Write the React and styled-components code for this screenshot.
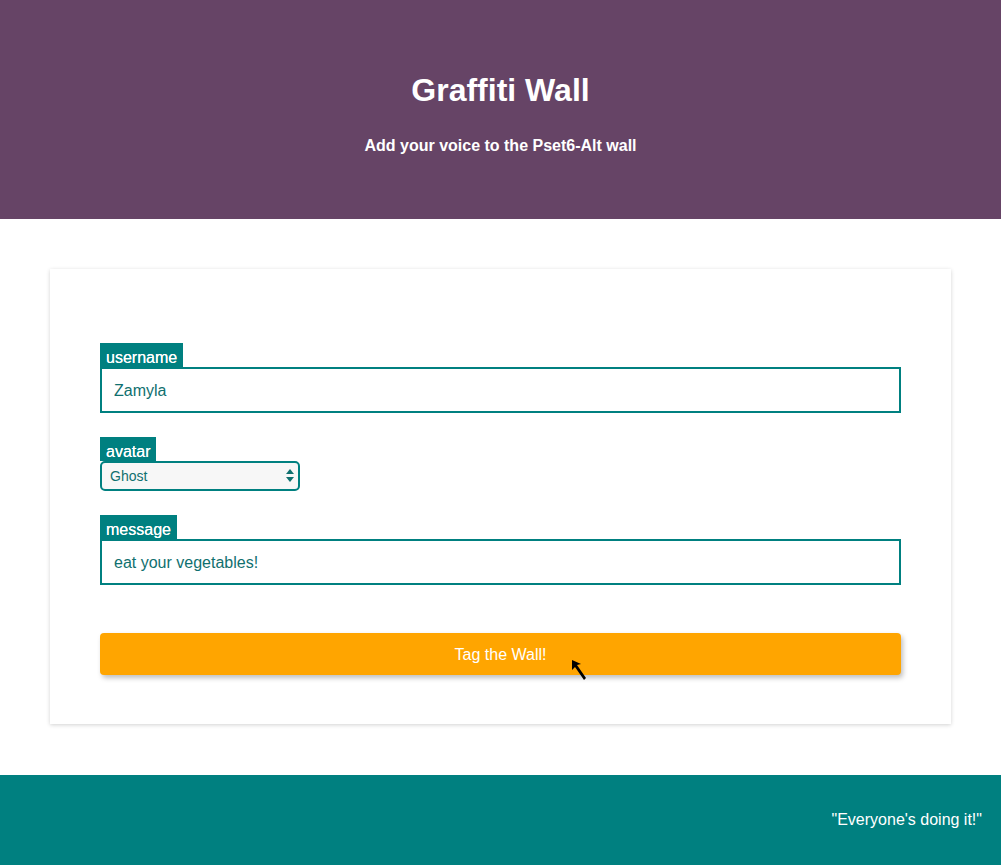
import React from "react";
import styled, { createGlobalStyle } from "styled-components";

const GlobalStyle = createGlobalStyle`
  body {
    margin: 0;
    font-family: "Liberation Sans", Arial, sans-serif;
    background: #ffffff;
  }
`;

const Header = styled.header`
  height: 219px;
  background: #664466;
  color: #ffffff;
  display: flex;
  flex-direction: column;
  align-items: center;
  box-sizing: border-box;
  padding-top: 70px;
`;

const Title = styled.h1`
  margin: 0;
  font-size: 32px;
  font-weight: bold;
  line-height: 40px;
`;

const Subtitle = styled.h2`
  margin: 26px 0 0;
  font-size: 16px;
  font-weight: bold;
  line-height: 20px;
`;

const Main = styled.main`
  padding: 50px 50px 51px;
`;

const Card = styled.form`
  background: #ffffff;
  box-shadow: 0 1px 4px rgba(0, 0, 0, 0.18);
  padding: 74px 50px 49px;
  display: flex;
  flex-direction: column;
`;

const Field = styled.div`
  display: flex;
  flex-direction: column;
  align-items: flex-start;
  margin-bottom: 24px;
`;

const Label = styled.label`
  background: #008080;
  color: #ffffff;
  font-size: 16px;
  line-height: 24px;
  height: 24px;
  padding: 3px 6px 0;
  box-sizing: border-box;
  overflow: hidden;
  text-shadow: 0 0 0.4px #ffffff;
`;

const TextInput = styled.input`
  width: 100%;
  height: 46px;
  box-sizing: border-box;
  border: 2px solid #008080;
  padding: 2px 12px 0;
  font-family: "Liberation Sans", Arial, sans-serif;
  font-size: 16px;
  color: #10706f;
  outline: none;
  background: #ffffff;
`;

const SelectWrap = styled.div`
  position: relative;
  width: 200px;
  height: 30px;
`;

const Select = styled.select`
  appearance: none;
  width: 100%;
  height: 100%;
  box-sizing: border-box;
  border: 2px solid #008080;
  border-radius: 5px;
  background: #f7f7f7;
  padding: 0 8px;
  font-family: "Liberation Sans", Arial, sans-serif;
  font-size: 14px;
  color: #10706f;
  outline: none;
`;

const SelectArrows = styled.svg`
  position: absolute;
  right: 6px;
  top: 8px;
  pointer-events: none;
`;

const Button = styled.button`
  margin-top: 24px;
  height: 42px;
  padding-top: 3px;
  border: none;
  border-radius: 4px;
  background: #ffa500;
  color: #ffffff;
  font-family: "Liberation Sans", Arial, sans-serif;
  font-size: 16px;
  box-shadow: 2px 3px 5px rgba(0, 0, 0, 0.25);
  position: relative;
  cursor: pointer;
`;

const Cursor = styled.svg`
  position: absolute;
  left: 471px;
  top: 26px;
`;

const Footer = styled.footer`
  height: 90px;
  background: #008080;
  color: #ffffff;
  display: flex;
  align-items: center;
  justify-content: flex-end;
  padding: 0 19px;
  font-size: 16px;
`;

export default function App() {
  return (
    <>
      <GlobalStyle />
      <Header>
        <Title>Graffiti Wall</Title>
        <Subtitle>Add your voice to the Pset6-Alt wall</Subtitle>
      </Header>
      <Main>
        <Card onSubmit={(e) => e.preventDefault()}>
          <Field>
            <Label>username</Label>
            <TextInput defaultValue="Zamyla" />
          </Field>
          <Field>
            <Label>avatar</Label>
            <SelectWrap>
              <Select defaultValue="Ghost">
                <option>Ghost</option>
                <option>Cat</option>
                <option>Robot</option>
              </Select>
              <SelectArrows width="8" height="13" viewBox="0 0 8 13">
                <path d="M4 0 L8 5 L0 5 Z" fill="#10706f" />
                <path d="M0 8 L8 8 L4 13 Z" fill="#10706f" />
              </SelectArrows>
            </SelectWrap>
          </Field>
          <Field>
            <Label>message</Label>
            <TextInput defaultValue="eat your vegetables!" />
          </Field>
          <Button type="submit">
            Tag the Wall!
            <Cursor width="16" height="24" viewBox="0 0 16 24">
              <path d="M1 1 L1 11 L4 8 L13 21 L15 19 L6 6 L10 5 Z" fill="#000" />
            </Cursor>
          </Button>
        </Card>
      </Main>
      <Footer>"Everyone's doing it!"</Footer>
    </>
  );
}
